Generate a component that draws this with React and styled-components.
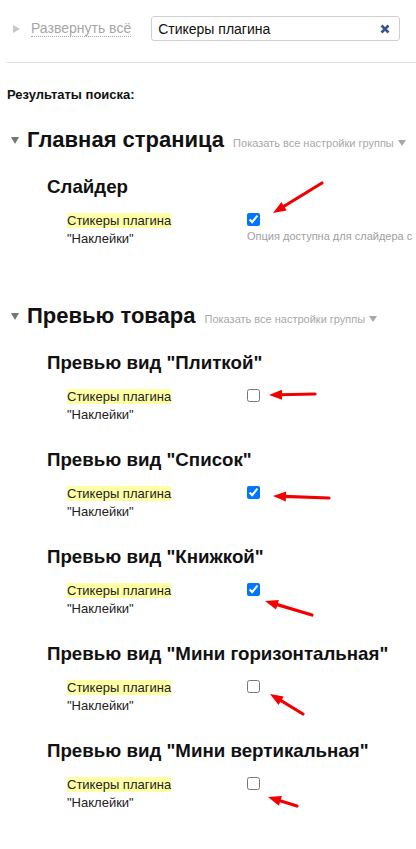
import React from "react";
import styled, { createGlobalStyle } from "styled-components";

const GlobalStyle = createGlobalStyle`
  body {
    margin: 0;
    background: #fff;
    font-family: "Liberation Sans", Arial, sans-serif;
    overflow-x: hidden;
  }
`;

const Page = styled.div`
  width: 416px;
  min-height: 849px;
  overflow: hidden;
`;

const Toolbar = styled.div`
  display: flex;
  align-items: center;
  gap: 20px;
  padding: 16px 16px 0 13px;
`;

const ExpandAll = styled.div`
  display: flex;
  align-items: center;
  gap: 11px;
  font-size: 14px;
  color: #a6a6a6;
  white-space: nowrap;

  > span {
    border-bottom: 1px dotted #a6a6a6;
    line-height: 15px;
  }
`;

const SmallTriangle = styled.i`
  width: 0;
  height: 0;
  border-top: 4px solid transparent;
  border-bottom: 4px solid transparent;
  border-left: 7px solid #c8c8c8;
`;

const SearchBox = styled.div`
  flex: 1;
  height: 25px;
  box-sizing: border-box;
  border: 1px solid #cfcfcf;
  border-radius: 3px;
  display: flex;
  align-items: center;
  padding: 0 9px 0 6px;
  font-size: 14px;
  color: #111;

  > span {
    flex: 1;
  }
`;

const Divider = styled.div`
  margin: 21px 0 0 7px;
  border-top: 1px solid #dedede;
`;

const ResultsTitle = styled.div`
  margin: 24px 0 0 7px;
  font-size: 13px;
  line-height: 16px;
  font-weight: bold;
  color: #111;
`;

const Group = styled.div`
  margin-top: ${(p) => (p.first ? "24px" : "55px")};
  padding-left: 11px;
`;

const GroupHead = styled.div`
  display: flex;
  align-items: baseline;
  white-space: nowrap;
`;

const DownTriangle = styled.i`
  width: 0;
  height: 0;
  border-left: 4.5px solid transparent;
  border-right: 4.5px solid transparent;
  border-top: 7px solid ${(p) => p.color || "#777"};
  margin-right: ${(p) => p.gap || "8px"};
  align-self: center;
`;

const GroupTitle = styled.h2`
  margin: 0 9px 0 0;
  font-size: 22px;
  line-height: 26px;
  font-weight: bold;
  color: #111;
`;

const ShowAll = styled.span`
  display: inline-flex;
  align-items: center;
  gap: 4px;
  font-size: 11px;
  color: #a8a8a8;

  ${DownTriangle} {
    margin: 0;
    border-left-width: 4px;
    border-right-width: 4px;
    border-top-width: 6px;
  }
`;

const Section = styled.div`
  margin: ${(p) => (p.first ? "23px" : "25px")} 0 0 36px;
`;

const SectionTitle = styled.h3`
  margin: 0 0 14px;
  font-size: 18.72px;
  line-height: 22px;
  font-weight: bold;
  color: #111;
  white-space: nowrap;
`;

const Row = styled.div`
  display: flex;
  padding-left: 20px;
`;

const Label = styled.div`
  flex: 0 0 180px;
  font-size: 13px;
  line-height: 18px;
  color: #222;

  > mark {
    background: #ffffa6;
    color: inherit;
  }
`;

const Control = styled.div`
  display: flex;
  flex-direction: column;
  padding-top: 1px;
  white-space: nowrap;
`;

const BoxWrap = styled.div`
  position: relative;
  width: 13px;
  height: 13px;

  > input {
    margin: 0;
    width: 13px;
    height: 13px;
    display: block;
  }
`;

const Hint = styled.div`
  margin-top: 3px;
  font-size: 11px;
  line-height: 14px;
  color: #a0a0a0;
`;

const ArrowSvg = styled.svg`
  position: absolute;
  left: 0;
  top: 0;
  width: 1px;
  height: 1px;
  overflow: visible;
  pointer-events: none;
`;

const Arrow = ({ tail, head }) => {
  const dx = head[0] - tail[0];
  const dy = head[1] - tail[1];
  const len = Math.hypot(dx, dy);
  const ux = dx / len;
  const uy = dy / len;
  const bx = head[0] - ux * 13;
  const by = head[1] - uy * 13;
  const nx = -uy * 5;
  const ny = ux * 5;
  return (
    <ArrowSvg>
      <line
        x1={tail[0]}
        y1={tail[1]}
        x2={bx + ux * 2}
        y2={by + uy * 2}
        stroke="#f20000"
        strokeWidth="3.2"
        strokeLinecap="round"
      />
      <polygon
        points={`${head[0]},${head[1]} ${bx + nx},${by + ny} ${bx - nx},${by - ny}`}
        fill="#f20000"
      />
    </ArrowSvg>
  );
};

const groups = [
  {
    title: "Главная страница",
    sections: [
      {
        title: "Слайдер",
        checked: true,
        hint: "Опция доступна для слайдера с",
        arrow: { head: [26, 0], tail: [75, -30] },
      },
    ],
  },
  {
    title: "Превью товара",
    sections: [
      { title: 'Превью вид "Плиткой"', checked: false, arrow: { head: [22, 6], tail: [68, 5] } },
      { title: 'Превью вид "Список"', checked: true, arrow: { head: [26, 10], tail: [82, 12] } },
      { title: 'Превью вид "Книжкой"', checked: true, arrow: { head: [18, 18], tail: [65, 32] } },
      { title: 'Превью вид "Мини горизонтальная"', checked: false, arrow: { head: [23, 14], tail: [56, 34] } },
      { title: 'Превью вид "Мини вертикальная"', checked: false, arrow: { head: [21, 20], tail: [50, 29] } },
    ],
  },
];

export default function App() {
  return (
    <Page>
      <GlobalStyle />
      <Toolbar>
        <ExpandAll>
          <SmallTriangle />
          <span>Развернуть всё</span>
        </ExpandAll>
        <SearchBox>
          <span>Стикеры плагина</span>
          <svg width="10" height="10" viewBox="0 0 10 10">
            <path d="M1.5 1.5 L8.5 8.5 M8.5 1.5 L1.5 8.5" stroke="#34568a" strokeWidth="2.6" />
          </svg>
        </SearchBox>
      </Toolbar>
      <Divider />
      <ResultsTitle>Результаты поиска:</ResultsTitle>
      {groups.map((group, gi) => (
        <Group key={group.title} first={gi === 0}>
          <GroupHead>
            <DownTriangle />
            <GroupTitle>{group.title}</GroupTitle>
            <ShowAll>
              Показать все настройки группы
              <DownTriangle color="#a8a8a8" />
            </ShowAll>
          </GroupHead>
          {group.sections.map((section, si) => (
            <Section key={section.title} first={si === 0}>
              <SectionTitle>{section.title}</SectionTitle>
              <Row>
                <Label>
                  <mark>Стикеры плагина</mark>
                  <br />
                  "Наклейки"
                </Label>
                <Control>
                  <BoxWrap>
                    <input type="checkbox" defaultChecked={section.checked} />
                    <Arrow head={section.arrow.head} tail={section.arrow.tail} />
                  </BoxWrap>
                  {section.hint && <Hint>{section.hint}</Hint>}
                </Control>
              </Row>
            </Section>
          ))}
        </Group>
      ))}
    </Page>
  );
}
